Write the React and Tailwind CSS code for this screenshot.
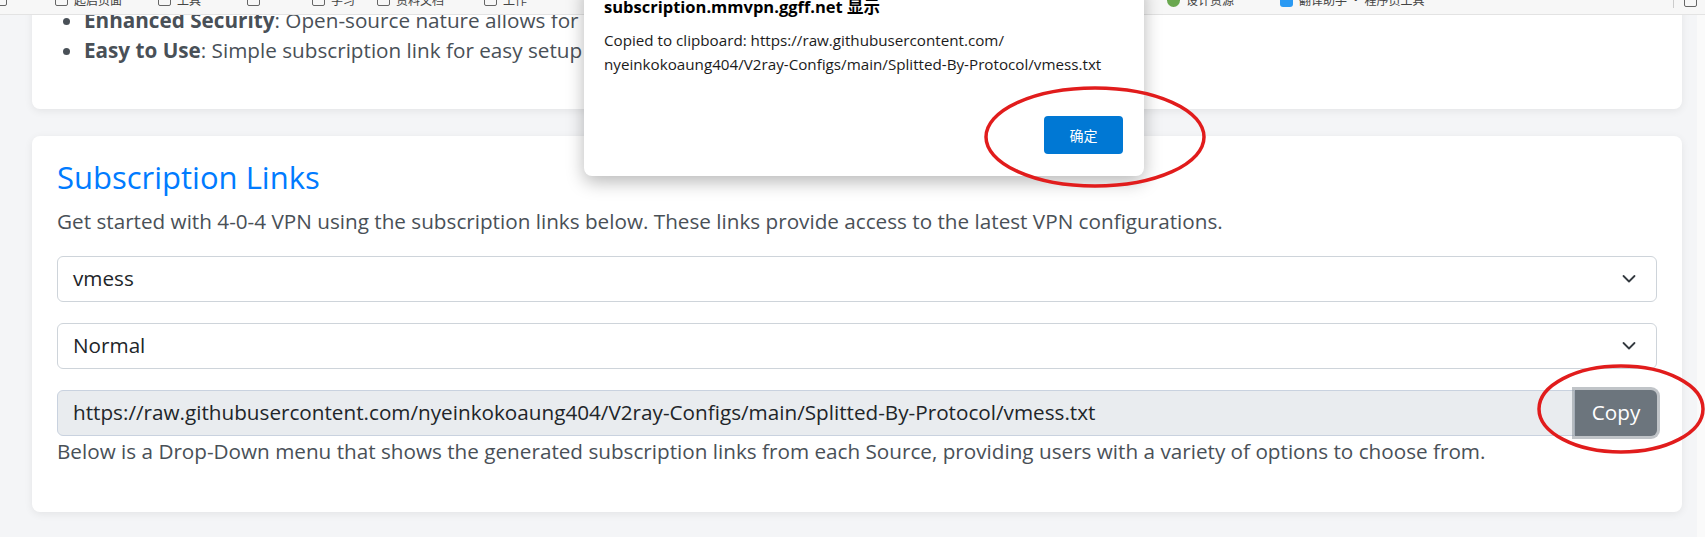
import React from 'react';

const BookmarkBar = () => {
  const left = [
    { x: 'ml-[-6px]', label: '' },
    { x: 'ml-[48px]', label: '起启页面' },
    { x: 'ml-[36px]', label: '工具' },
    { x: 'ml-[46px]', label: '' },
    { x: 'ml-[52px]', label: '学习' },
    { x: 'ml-[22px]', label: '资料文档' },
    { x: 'ml-[40px]', label: '工作' },
  ];
  return (
    <div className="relative z-10 h-[15px] overflow-hidden bg-[#f7f7f7] border-b border-[#e3e3e3] flex items-start">
      <div className="flex items-center -mt-[9px]">
        {left.map((b, i) => (
          <div key={i} className={`flex items-center gap-[6px] ${b.x}`}>
            <div className="w-[13px] h-[11px] rounded-[2px] border-[1.5px] border-[#666]" />
            {b.label && <span className="text-[12px] text-[#444] font-['Noto_Sans_CJK_SC',sans-serif]">{b.label}</span>}
          </div>
        ))}
      </div>
      <div className="flex items-center -mt-[9px] ml-[640px] gap-[6px]">
        <div className="w-[13px] h-[13px] rounded-full bg-[#6aa84f]" />
        <span className="text-[12px] text-[#444] font-['Noto_Sans_CJK_SC',sans-serif]">设计资源</span>
        <div className="ml-[40px] w-[13px] h-[13px] rounded-[3px] bg-[#2b9af3]" />
        <span className="text-[12px] text-[#444] font-['Noto_Sans_CJK_SC',sans-serif]">翻译助手 · 程序员工具</span>
      </div>
      <div className="ml-auto flex items-center -mt-[6px] mr-[8px] gap-[10px]">
        <div className="w-px h-[14px] bg-[#ccc]" />
        <div className="w-[13px] h-[11px] rounded-[2px] border-[1.5px] border-[#666]" />
      </div>
    </div>
  );
};

const Chevron = () => (
  <svg className="absolute right-[20px] top-1/2 -translate-y-1/2" width="14" height="9" viewBox="0 0 14 9" fill="none">
    <path d="M1.5 1.5 L7 7 L12.5 1.5" stroke="#343a40" strokeWidth="1.8" strokeLinecap="round" strokeLinejoin="round" />
  </svg>
);

const SelectBox = ({ value }) => (
  <div className="relative h-[46px] rounded-[6px] border border-[#ced4da] bg-white flex items-center pl-[15px] text-[20.7px] text-[#212529]">
    {value}
    <Chevron />
  </div>
);

const Dialog = () => (
  <div className="absolute z-20 left-[584px] top-[-16px] w-[560px] h-[192px] bg-white rounded-b-[8px] shadow-[0_6px_18px_rgba(0,0,0,0.28)] pl-[20px] pr-[21px] pt-[12px] flex flex-col font-['Open_Sans','Noto_Sans_CJK_SC',sans-serif]">
    <div className="text-[16.5px] leading-[21px] font-bold text-black">subscription.mmvpn.ggff.net 显示</div>
    <div className="mt-[11px] text-[15.2px] leading-[24px] text-[#1b1b1b]">
      <div>Copied to clipboard: https://raw.githubusercontent.com/</div>
      <div>nyeinkokoaung404/V2ray-Configs/main/Splitted-By-Protocol/vmess.txt</div>
    </div>
    <div className="mt-auto mb-[22px] self-end">
      <button className="w-[79px] h-[38px] rounded-[4px] bg-[#0078d4] text-white text-[14px] font-['Noto_Sans_CJK_SC',sans-serif]">确定</button>
    </div>
  </div>
);

const Marks = () => (
  <svg className="absolute inset-0 z-30 pointer-events-none" width="1705" height="537" viewBox="0 0 1705 537" fill="none">
    <ellipse cx="1095" cy="137" rx="109" ry="49" stroke="#e11c1c" strokeWidth="3.5" />
    <ellipse cx="1621" cy="409" rx="82" ry="43" stroke="#e11c1c" strokeWidth="3.5" />
  </svg>
);

export default function App() {
  return (
    <div className="relative w-[1705px] h-[537px] overflow-hidden bg-[#f4f5f7] font-['Open_Sans',sans-serif]">
      <BookmarkBar />
      <div className="h-[522px] overflow-hidden flex">
        <main className="flex-1 pl-[32px] pr-[15px]">
          {/* top card, scrolled mostly out of view */}
          <section className="-mt-[34px] bg-white rounded-[8px] shadow-[0_2px_8px_rgba(0,0,0,0.07)] px-[24px] pt-[24px] pb-[24px]">
            <ul className="list-disc pl-[28px] mb-[20px] text-[20.7px] leading-[30px] text-[#495057] marker:text-[#495057]">
              <li><b className="font-bold">Enhanced Security</b>: Open-source nature allows for community review and constant improvement.</li>
              <li><b className="font-bold">Easy to Use</b>: Simple subscription link for easy setup on any device.</li>
            </ul>
          </section>

          <section className="mt-[27px] bg-white rounded-[8px] shadow-[0_2px_8px_rgba(0,0,0,0.07)] px-[25px] pt-[22px] pb-[46px]">
            <h2 className="text-[31px] leading-[38px] text-[#007bff] font-normal mb-[10px]">Subscription Links</h2>
            <p className="text-[20.7px] leading-[30px] text-[#495057] mb-[20px]">
              Get started with 4-0-4 VPN using the subscription links below. These links provide access to the latest VPN configurations.
            </p>
            <div className="flex flex-col gap-[21px]">
              <SelectBox value="vmess" />
              <SelectBox value="Normal" />
              <div className="flex h-[46px]">
                <div className="flex-1 flex items-center pl-[15px] bg-[#e9ecef] border border-[#c9d2df] rounded-l-[6px] text-[20.7px] text-[#212529]">
                  https://raw.githubusercontent.com/nyeinkokoaung404/V2ray-Configs/main/Splitted-By-Protocol/vmess.txt
                </div>
                <button className="w-[82px] bg-[#6c757d] text-white text-[20.7px] rounded-r-[6px] shadow-[0_0_0_3px_rgba(130,138,145,0.5)] relative">Copy</button>
              </div>
            </div>
            <p className="text-[20.7px] leading-[30px] text-[#495057]">
              Below is a Drop-Down menu that shows the generated subscription links from each Source, providing users with a variety of options to choose from.
            </p>
          </section>
        </main>
        <div className="w-[8px] bg-[#fafafa]" />
      </div>
      <Dialog />
      <Marks />
    </div>
  );
}
